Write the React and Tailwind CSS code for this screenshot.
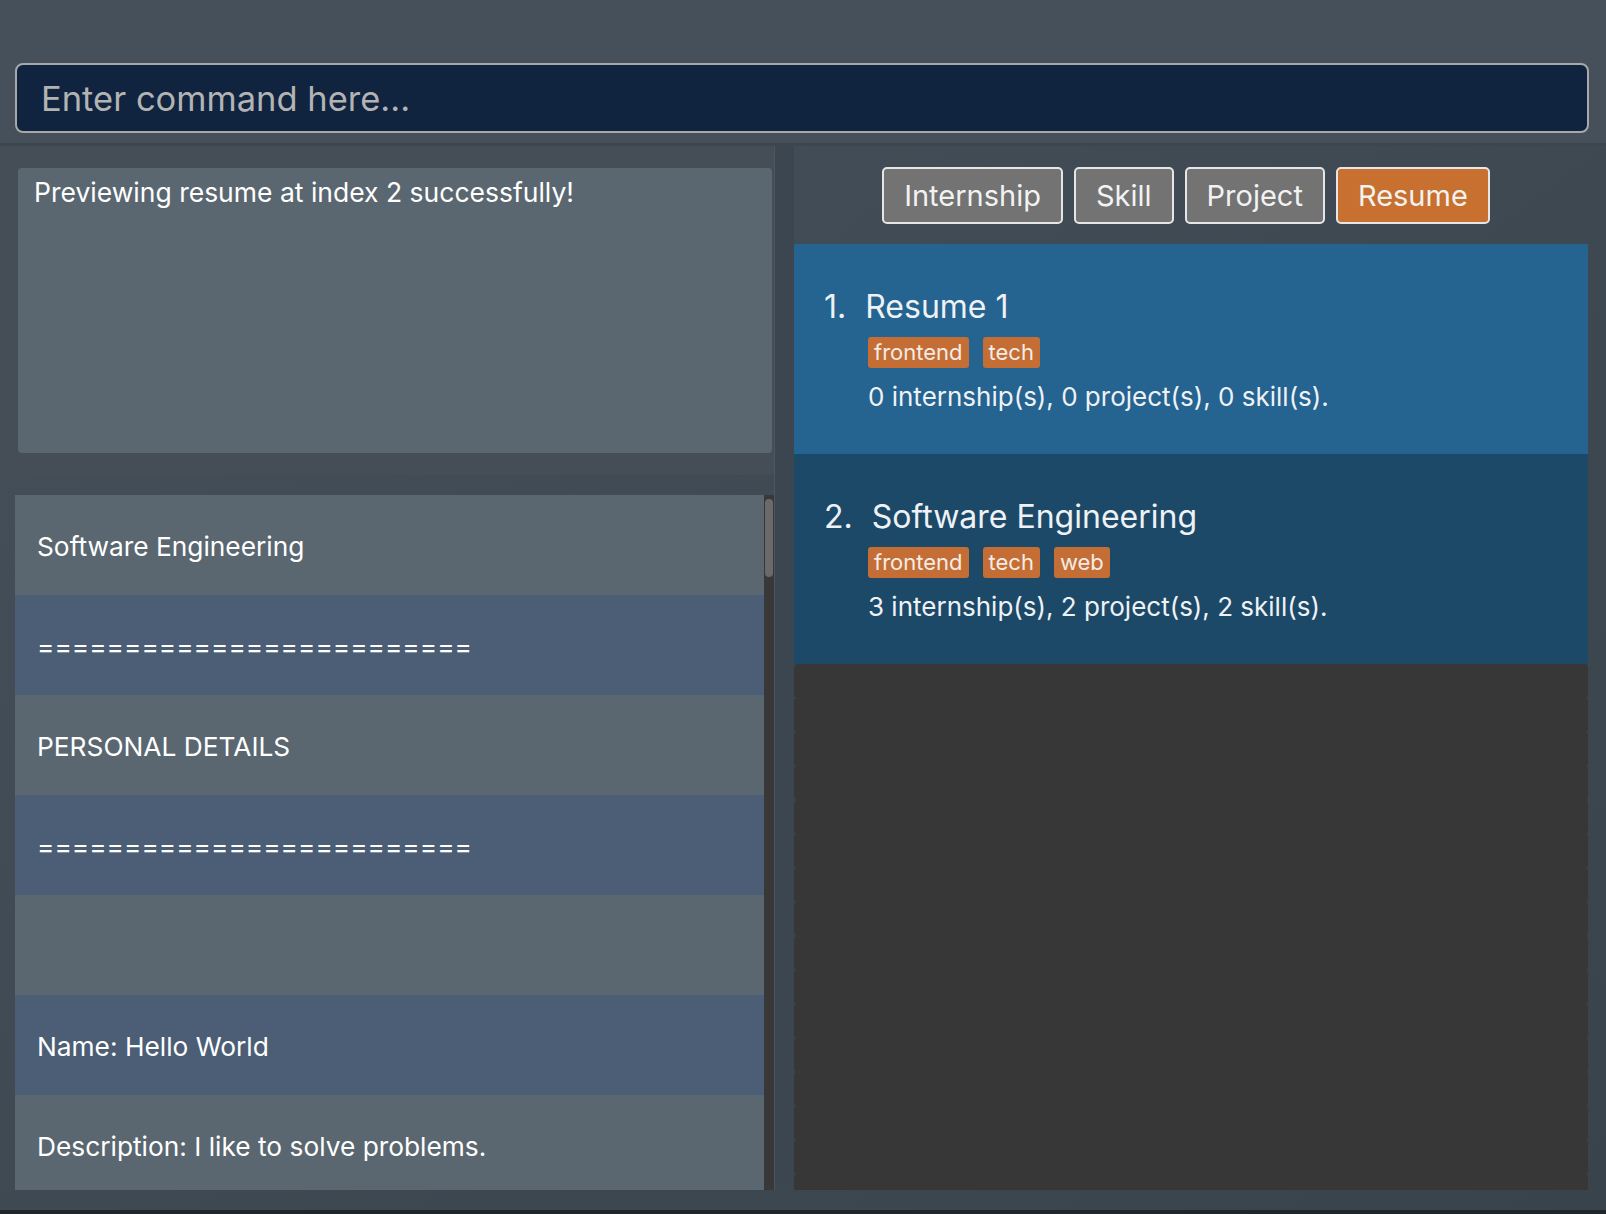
import React from "react";

const resumes = [
  {
    id: 1,
    name: "Resume 1",
    tags: ["frontend", "tech"],
    summary: "0 internship(s), 0 project(s), 0 skill(s).",
    bg: "bg-[#256390]",
  },
  {
    id: 2,
    name: "Software Engineering",
    tags: ["frontend", "tech", "web"],
    summary: "3 internship(s), 2 project(s), 2 skill(s).",
    bg: "bg-[#1d4968]",
  },
];

const previewLines = [
  "Software Engineering",
  "=========================",
  "PERSONAL DETAILS",
  "=========================",
  "",
  "Name: Hello World",
  "Description: I like to solve problems.",
];

const tabs = ["Internship", "Skill", "Project", "Resume"];

function ResumeCard({ item }) {
  return (
    <div className={`h-[210px] shrink-0 ${item.bg} pt-[44px] pl-[30px]`}>
      <div className="flex items-center h-[38px] text-[32px] text-[#eef2f5]">
        <span>{item.id}.</span>
        <span className="ml-[19px]">{item.name}</span>
      </div>
      <div className="flex gap-[14px] mt-[11px] pl-[44px]">
        {item.tags.map((t) => (
          <span
            key={t}
            className="h-[31px] flex items-center px-[6px] rounded-[3px] bg-[#c46e35] text-[22px] text-[#f3ece6]"
          >
            {t}
          </span>
        ))}
      </div>
      <div className="mt-[13px] pl-[44px] text-[26px] leading-[31px] text-[#eef2f5]">{item.summary}</div>
    </div>
  );
}

export default function App() {
  return (
    <div className="w-[1606px] h-[1214px] flex flex-col overflow-hidden bg-linear-to-br from-[#46505a] to-[#39434c] font-['Inter',sans-serif] text-white">
      {/* command box */}
      <div className="h-[143px] shrink-0 bg-[#46505a] pt-[63px] pl-[15px] pr-[17px]">
        <input
          className="w-full h-[70px] rounded-[8px] border-2 border-[#a8a8a8] bg-[#10233f] pl-[24px] text-[34.5px] text-white outline-none placeholder:text-[#b3b3b3]"
          placeholder="Enter command here..."
        />
      </div>
      <div className="h-[3px] shrink-0 bg-[#3d454d]" />

      <div className="flex h-[1044px] shrink-0">
        {/* left column */}
        <div className="w-[774px] flex flex-col">
          <div className="h-[329px] bg-[#454e57] pt-[22px] pb-[22px] pl-[18px] pr-[2px] rounded-br-[4px]">
            <div className="h-full rounded-[4px] bg-[#5b6770] pl-[16px] pt-[9px] text-[26.5px] leading-[31px] text-white">
              Previewing resume at index 2 successfully!
            </div>
          </div>
          <div className="h-[20px]" />
          <div className="h-[695px] flex pl-[15px]">
            <div className="w-[749px] overflow-hidden">
              {previewLines.map((line, i) => (
                <div
                  key={i}
                  className={`h-[100px] flex items-center pl-[22px] pt-[3px] text-[26.3px] text-white ${
                    i % 2 === 0 ? "bg-[#5a6770]" : "bg-[#4b5e75]"
                  }`}
                >
                  {line}
                </div>
              ))}
            </div>
            <div className="w-[10px] bg-[#383838] pt-[4px] pl-[1px]">
              <div className="w-[8px] h-[78px] rounded-full bg-[#6a6a6a]" />
            </div>
          </div>
        </div>

        {/* divider */}
        <div className="w-[20px] flex">
          <div className="w-[1px] bg-[#4b5661]" />
          <div className="flex-1 bg-[#3c4650]" />
        </div>

        {/* right column */}
        <div className="w-[794px] flex flex-col pt-[21px]">
          <div className="h-[57px] flex justify-center gap-[11px] pr-[10px]">
            {tabs.map((t) => (
              <button
                key={t}
                className={`h-[57px] px-[20px] rounded-[5px] border-2 border-[#e6e6e6] text-[29px] text-[#f2f2f2] ${
                  t === "Resume" ? "bg-[#c8702f]" : "bg-[#737373]"
                }`}
              >
                {t}
              </button>
            ))}
          </div>
          <div className="mt-[20px] h-[946px] flex flex-col overflow-hidden">
            {resumes.map((r) => (
              <ResumeCard key={r.id} item={r} />
            ))}
            {Array.from({ length: 16 }).map((_, i) => (
              <div key={i} className="h-[34px] shrink-0 rounded-[3px] bg-[#373737]" />
            ))}
          </div>
        </div>
      </div>

      <div className="h-[20px] shrink-0" />
      <div className="h-[4px] shrink-0 bg-[#20262b]" />
    </div>
  );
}
